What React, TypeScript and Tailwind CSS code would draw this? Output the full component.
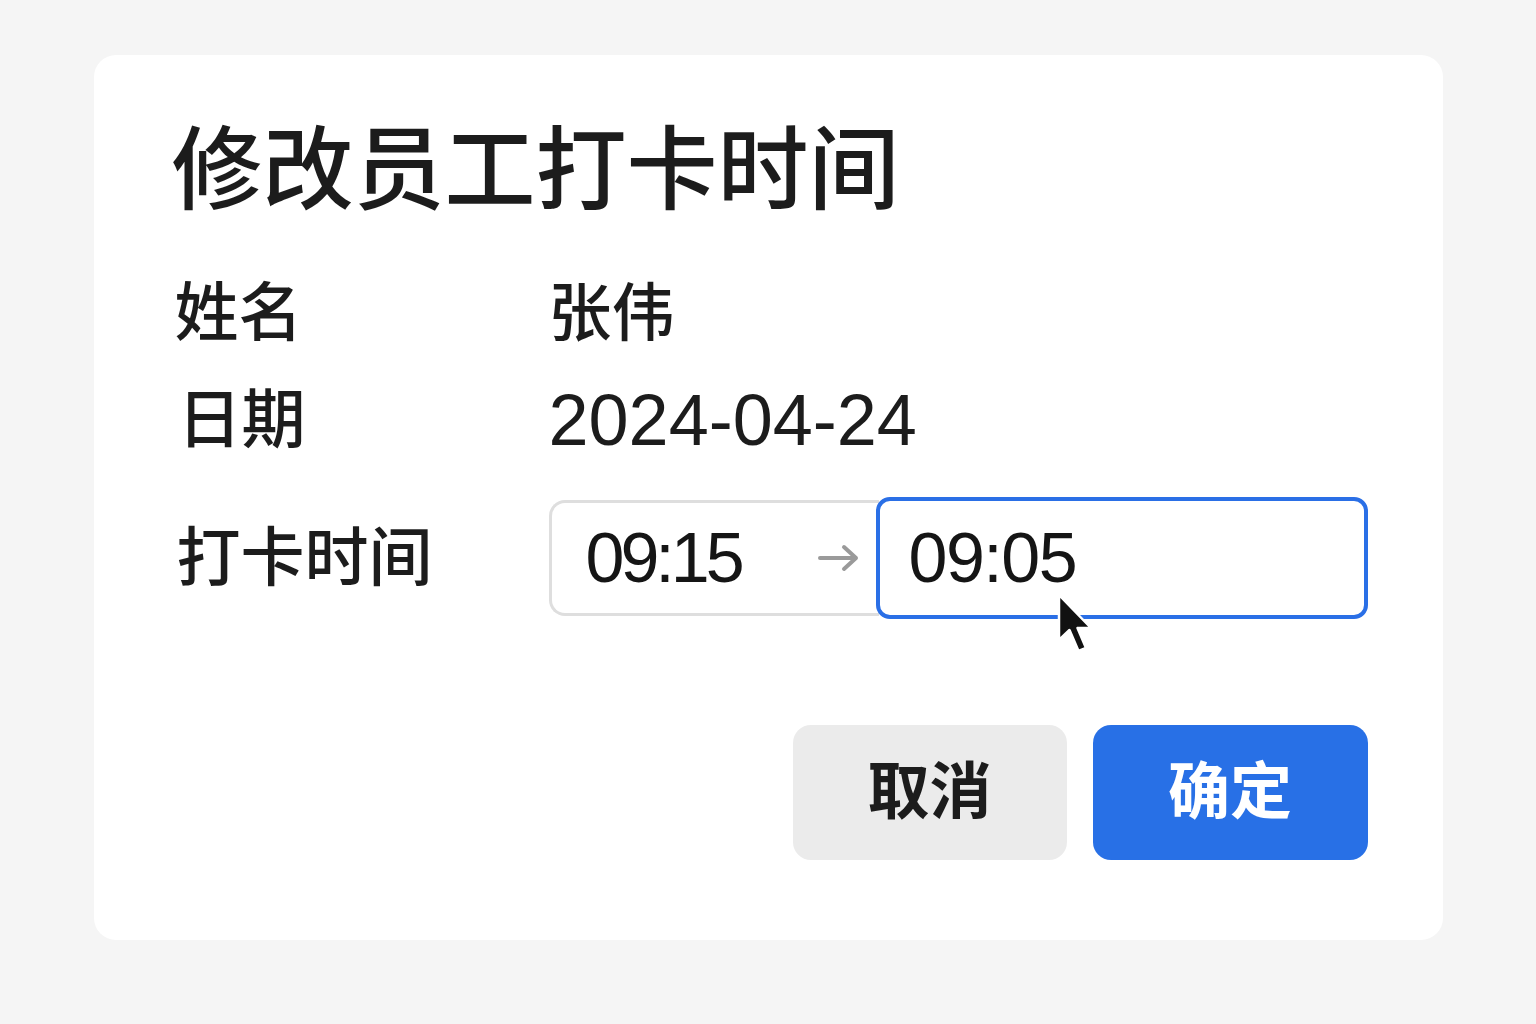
import React from 'react'

const font = { fontFamily: '"Liberation Sans", "Noto Sans CJK SC", sans-serif' }

function Cursor() {
  return (
    <svg
      className="pointer-events-none absolute left-[177px] top-[92px]"
      width="40"
      height="62"
      viewBox="0 0 40 62"
    >
      <path
        d="M2 2 L2 47 L12.5 37 L21.5 58 L29 55 L20.5 35 L34 35 Z"
        fill="#111"
        stroke="#fff"
        strokeWidth="2.5"
        strokeLinejoin="round"
      />
    </svg>
  )
}

function ArrowRight() {
  return (
    <svg className="ml-[77px]" width="42" height="28" viewBox="0 0 42 28" fill="none">
      <path
        d="M2 14 H38 M26 3 L38 14 L26 25"
        stroke="#9a9a9a"
        strokeWidth="4"
        strokeLinecap="round"
        strokeLinejoin="round"
      />
    </svg>
  )
}

function TimeField() {
  return (
    <div className="flex h-[122px] w-[819px] items-center">
      <div className="flex h-[116px] w-[330px] items-center rounded-l-[16px] border-[3px] border-r-0 border-[#dedede] bg-white pl-[34px]">
        <span className="text-[70px] leading-none tracking-[-4px] text-[#151515]">09:15</span>
        <ArrowRight />
      </div>
      <div className="relative -ml-[3px] flex h-[122px] flex-1 items-center rounded-[14px] border-[4px] border-[#2a6fe6] bg-white pl-[29px]">
        <span className="text-[70px] leading-none tracking-[-1.5px] text-[#151515]">09:05</span>
        <Cursor />
      </div>
    </div>
  )
}

export default function App() {
  return (
    <div className="flex min-h-[1024px] w-full justify-center bg-[#f5f5f5] pt-[55px]" style={font}>
      <div className="h-[885px] w-[1349px] rounded-[22px] bg-white pl-[78px] pr-[75px] pt-[65px]">
        <h1 className="flex h-[100px] items-center text-[91px] font-medium leading-none text-[#1c1c1c]">
          修改员工打卡时间
        </h1>

        <div className="mt-[43px] grid grid-cols-[377px_1fr] text-[#1c1c1c]">
          <div className="flex h-[100px] items-center pl-[3px] text-[64px] font-medium leading-none">姓名</div>
          <div className="flex h-[100px] items-center text-[63px] font-medium leading-none">张伟</div>

          <div className="mt-[7px] flex h-[100px] items-center pl-[6px] text-[64px] font-medium leading-none">日期</div>
          <div className="mt-[7px] flex h-[100px] items-center text-[72px] leading-none">2024-04-24</div>

          <div className="mt-[27px] flex h-[122px] items-center pl-[5px] text-[64px] font-medium leading-none">打卡时间</div>
          <div className="mt-[27px] flex h-[122px] items-center">
            <TimeField />
          </div>
        </div>

        <div className="mt-[106px] flex justify-end gap-[26px]">
          <button className="flex h-[135px] w-[274px] items-center justify-center rounded-[18px] bg-[#ebebeb] text-[62px] font-semibold leading-none text-[#1c1c1c]">
            取消
          </button>
          <button className="flex h-[135px] w-[275px] items-center justify-center rounded-[18px] bg-[#2870e6] text-[62px] font-semibold leading-none text-white">
            确定
          </button>
        </div>
      </div>
    </div>
  )
}
